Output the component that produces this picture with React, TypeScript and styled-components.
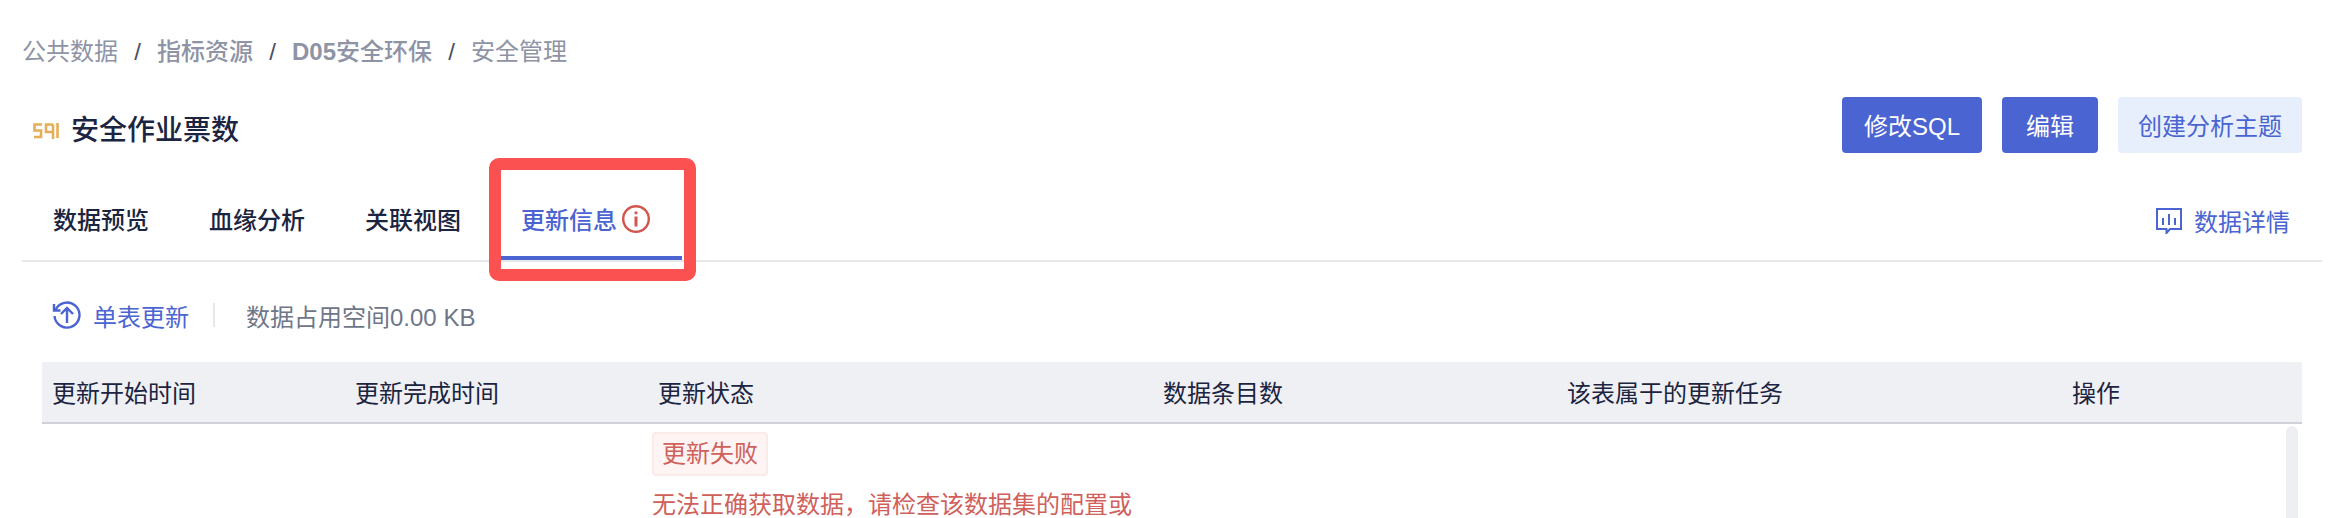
import React from "react";
import styled, { createGlobalStyle } from "styled-components";

const BLUE = "#4a64d2";
const NAVY = "#1b2440";
const RED = "#d0605a";

const GlobalStyle = createGlobalStyle`
  html, body {
    margin: 0;
    padding: 0;
    background: #fff;
  }

  body {
    font-family: "Liberation Sans", "Noto Sans CJK SC", sans-serif;
    font-size: 24px;
    color: ${NAVY};
  }
`;

const tabs = ["数据预览", "血缘分析", "关联视图"];
const columns = [
  "更新开始时间",
  "更新完成时间",
  "更新状态",
  "数据条目数",
  "该表属于的更新任务",
  "操作",
];

const SqlLogo = () => (
  <svg width="28" height="16" viewBox="0 0 28 16" fill="none" stroke="#e6ae58" strokeWidth="2.6">
    <path d="M9 1.5H1.5V7.5H8V14H1" />
    <path d="M20 1.5H13V9H20M20 1.5V16" />
    <path d="M24.5 0V15" />
  </svg>
);

const InfoIcon = () => (
  <svg width="28" height="28" viewBox="0 0 28 28" fill="none" stroke="#d0564f">
    <circle cx="14" cy="14" r="12.8" strokeWidth="2.4" />
    <circle cx="14" cy="7.8" r="1.6" fill="#d0564f" stroke="none" />
    <path d="M14 11.5V21.5" strokeWidth="3" />
  </svg>
);

const DetailIcon = () => (
  <svg width="26" height="26" viewBox="0 0 26 26" fill="none" stroke={BLUE} strokeWidth="2">
    <path d="M1 1H25V21H14L10.5 25V21H1Z" />
    <path d="M7 10V17M13 6V17M19 10V17" />
  </svg>
);

const UpdateIcon = () => (
  <svg width="30" height="28" viewBox="0 0 30 28" fill="none" stroke={BLUE} strokeWidth="2.4">
    <path d="M3.4 9.3A12.5 12.5 0 1 1 2.5 15" />
    <path d="M2 3V9.5H8.5" />
    <path d="M15 22V7M9 13L15 7L21 13" />
  </svg>
);

const App: React.FC = () => {
  return (
    <Page>
      <GlobalStyle />
      <Breadcrumb>
        <Crumb>公共数据</Crumb>
        <Slash>/</Slash>
        <Crumb $strong>指标资源</Crumb>
        <Slash>/</Slash>
        <Crumb $strong>
          <CrumbCode>D05</CrumbCode>安全环保
        </Crumb>
        <Slash>/</Slash>
        <Crumb>安全管理</Crumb>
      </Breadcrumb>

      <Header>
        <Title>
          <SqlLogo />
          <TitleText>安全作业票数</TitleText>
        </Title>
        <Actions>
          <Button $width={140}>修改SQL</Button>
          <Button $width={96}>编辑</Button>
          <Button $width={184} $light>
            创建分析主题
          </Button>
        </Actions>
      </Header>

      <TabBar>
        <TabList>
          {tabs.map((tab) => (
            <Tab key={tab}>{tab}</Tab>
          ))}
          <Tab $active>
            更新信息
            <InfoIcon />
            <Highlight />
          </Tab>
        </TabList>
        <DetailLink>
          <DetailIcon />
          数据详情
        </DetailLink>
      </TabBar>

      <Toolbar>
        <UpdateLink>
          <UpdateIcon />
          单表更新
        </UpdateLink>
        <Separator />
        <Usage>数据占用空间0.00 KB</Usage>
      </Toolbar>

      <Table>
        <HeadRow>
          {columns.map((column) => (
            <HeadCell key={column}>{column}</HeadCell>
          ))}
        </HeadRow>
        <Body>
          <StatusCell>
            <StatusTag>更新失败</StatusTag>
            <ErrorText>无法正确获取数据，请检查该数据集的配置或</ErrorText>
          </StatusCell>
          <ScrollThumb />
        </Body>
      </Table>
    </Page>
  );
};

const Page = styled.div`
  width: 2352px;
  height: 518px;
  overflow: hidden;
  background: #fff;
`;

const Breadcrumb = styled.div`
  display: flex;
  align-items: center;
  height: 34px;
  padding: 35px 0 0 22px;
  line-height: 34px;
`;

const Crumb = styled.span<{ $strong?: boolean }>`
  color: #8e94a5;
  font-weight: ${({ $strong }) => ($strong ? 500 : 400)};
`;

const CrumbCode = styled.span`
  font-weight: 700;
`;

const Slash = styled.span`
  width: 39px;
  text-align: center;
  color: #4a5064;
`;

const Header = styled.div`
  display: flex;
  justify-content: space-between;
  height: 87px;
  padding: 28px 50px 0 33px;
`;

const Title = styled.div`
  display: flex;
  align-items: center;
  gap: 10px;
  height: 40px;
  margin-top: 14px;
`;

const TitleText = styled.h1`
  margin: 0;
  font-size: 28px;
  font-weight: 500;
  line-height: 40px;
  color: ${NAVY};
`;

const Actions = styled.div`
  display: flex;
  gap: 20px;
`;

const Button = styled.button<{ $width: number; $light?: boolean }>`
  width: ${({ $width }) => $width}px;
  height: 56px;
  padding: 0 0 2px;
  border: 0;
  border-radius: 4px;
  font: inherit;
  background: ${({ $light }) => ($light ? "#e7effc" : BLUE)};
  color: ${({ $light }) => ($light ? BLUE : "#fff")};
`;

const TabBar = styled.div`
  display: flex;
  justify-content: space-between;
  margin: 0 30px 0 22px;
  padding: 0 32px 0 11px;
  border-bottom: 2px solid #e6e7ec;
`;

const TabList = styled.div`
  display: flex;
  gap: 20px;
`;

const Tab = styled.div<{ $active?: boolean }>`
  position: relative;
  display: flex;
  align-items: center;
  gap: 5px;
  height: 69px;
  padding: 0 ${({ $active }) => ($active ? 32 : 20)}px 3px 20px;
  border-bottom: 4px solid ${({ $active }) => ($active ? BLUE : "transparent")};
  font-weight: 500;
  color: ${({ $active }) => ($active ? BLUE : NAVY)};
`;

const Highlight = styled.div`
  position: absolute;
  top: -26px;
  left: -12px;
  right: -14px;
  bottom: -25px;
  border: 12px solid #fb5151;
  border-radius: 10px;
`;

const DetailLink = styled.div`
  display: flex;
  align-items: center;
  gap: 12px;
  height: 73px;
  color: ${BLUE};
`;

const Toolbar = styled.div`
  display: flex;
  align-items: center;
  height: 94px;
  padding: 6px 0 0 52px;
`;

const UpdateLink = styled.div`
  display: flex;
  align-items: center;
  gap: 11px;
  color: ${BLUE};
`;

const Separator = styled.div`
  width: 2px;
  height: 24px;
  margin: 0 31px 0 24px;
  background: #e6e7ec;
`;

const Usage = styled.span`
  color: #6f7687;
`;

const Table = styled.div`
  margin: 0 50px 0 42px;
`;

const HeadRow = styled.div`
  display: grid;
  grid-template-columns: 303px 303px 505px 404px 505px 1fr;
  height: 60px;
  background: #eff0f4;
  border-bottom: 2px solid #d0d2d9;
`;

const HeadCell = styled.div`
  display: flex;
  align-items: center;
  padding: 0 0 1px 10px;
  color: ${NAVY};
`;

const Body = styled.div`
  position: relative;
  padding: 8px 0 0 610px;
`;

const StatusCell = styled.div`
  display: flex;
  flex-direction: column;
  align-items: flex-start;
  gap: 8px;
`;

const StatusTag = styled.span`
  box-sizing: border-box;
  height: 44px;
  padding: 0 8px;
  border: 2px solid #fbebe9;
  border-radius: 4px;
  background: #fdf4f3;
  line-height: 40px;
  color: ${RED};
`;

const ErrorText = styled.div`
  line-height: 42px;
  color: ${RED};
`;

const ScrollThumb = styled.div`
  position: absolute;
  top: 2px;
  right: 4px;
  width: 12px;
  height: 200px;
  border-radius: 6px;
  background: #eeeff2;
`;

export default App;
